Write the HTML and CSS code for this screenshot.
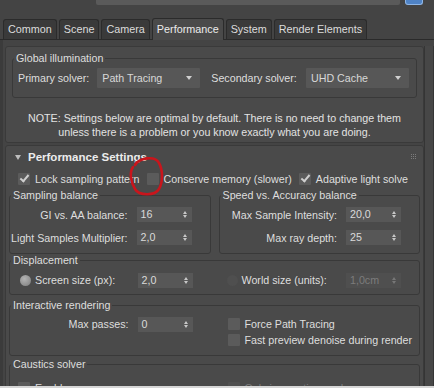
FILE: index.html
```html
<!DOCTYPE html>
<html lang="en">
<head>
  <meta charset="UTF-8">
  <title>Render Setup - Performance</title>
  <link rel="stylesheet" href="styles.css">
</head>
<body>

  <div class="topbar">
    <span class="preset-field"></span>
    <span class="preset-btn"></span>
  </div>

  <nav class="tabs">
    <div class="tab">Common</div>
    <div class="tab">Scene</div>
    <div class="tab">Camera</div>
    <div class="tab active">Performance</div>
    <div class="tab">System</div>
    <div class="tab">Render Elements</div>
  </nav>

  <div class="content">
    <div class="rollouts">

      <section class="rollout">
        <fieldset class="group gi-group">
          <legend>Global illumination</legend>
          <div class="solver-row">
            <span>Primary solver:</span>
            <div class="dropdown first">Path Tracing</div>
            <span class="second-label">Secondary solver:</span>
            <div class="dropdown second">UHD Cache</div>
          </div>
        </fieldset>
        <p class="note">NOTE: Settings below are optimal by default. There is no need to change them<br>unless there is a problem or you know exactly what you are doing.</p>
      </section>

      <section class="rollout">
        <header class="rollout-head">
          <span class="arrow"></span>
          <span class="head-title">Performance Settings</span>
          <span class="grip"></span>
        </header>

        <div class="check-row">
          <label class="check"><span class="box checked"></span>Lock sampling pattern</label>
          <label class="check"><span class="box"></span>Conserve memory (slower)</label>
          <label class="check"><span class="box checked"></span>Adaptive light solve</label>
        </div>

        <div class="two-col">
          <fieldset class="group">
            <legend>Sampling balance</legend>
            <div class="field"><span>GI vs. AA balance:</span><div class="spinner">16</div></div>
            <div class="field"><span>Light Samples Multiplier:</span><div class="spinner">2,0</div></div>
          </fieldset>
          <fieldset class="group">
            <legend>Speed vs. Accuracy balance</legend>
            <div class="field"><span>Max Sample Intensity:</span><div class="spinner">20,0</div></div>
            <div class="field"><span>Max ray depth:</span><div class="spinner">25</div></div>
          </fieldset>
        </div>

        <fieldset class="group displacement">
          <legend>Displacement</legend>
          <div class="halves">
            <div class="field radio-field">
              <label class="radio-label"><span class="radio on"></span>Screen size (px):</label>
              <div class="spinner">2,0</div>
            </div>
            <div class="field radio-field">
              <label class="radio-label"><span class="radio"></span>World size (units):</label>
              <div class="spinner disabled">1,0cm</div>
            </div>
          </div>
        </fieldset>

        <fieldset class="group interactive">
          <legend>Interactive rendering</legend>
          <div class="halves">
            <div class="field short"><span>Max passes:</span><div class="spinner">0</div></div>
            <div class="check-list">
              <label class="check"><span class="box"></span>Force Path Tracing</label>
              <label class="check"><span class="box"></span>Fast preview denoise during render</label>
            </div>
          </div>
        </fieldset>

        <fieldset class="group caustics">
          <legend>Caustics solver</legend>
          <div class="halves">
            <label class="check enable"><span class="box"></span>Enable</label>
            <label class="check dim"><span class="box"></span>Only in caustics mode</label>
          </div>
        </fieldset>
      </section>

    </div>
    <div class="scroll"></div>
  </div>

  <svg class="mark" width="44" height="48" viewBox="0 0 44 48">
    <path d="M10 12 C 14 5, 30 2, 34 10 C 38 17, 38 29, 34 36 C 30 43, 14 43, 10 36 C 6 29, 4 20, 8 14" fill="none" stroke="#c9151c" stroke-width="2.6" stroke-linecap="round"/>
  </svg>

  <div class="edge"></div>

</body>
</html>
```

FILE: styles.css
```css
* {
  box-sizing: border-box;
}

body {
  margin: 0;
  width: 434px;
  height: 388px;
  overflow: hidden;
  position: relative;
  background: #444444;
  color: #dedede;
  font-family: "Liberation Sans", Arial, sans-serif;
  font-size: 10.7px;
  white-space: nowrap;
}

/* preset bar cut off at the top */
.topbar {
  display: flex;
  height: 5px;
}

.preset-field {
  margin-left: 96px;
  width: 304px;
  background: #5a5a5a;
  border-radius: 0 0 2px 2px;
}

.preset-btn {
  margin-left: 5px;
  width: 18px;
  background: #4f83c6;
  border: 1px solid #8fb6e6;
  border-top: none;
  border-radius: 0 0 3px 3px;
}

/* tabs */
.tabs {
  display: flex;
  align-items: flex-end;
  gap: 2px;
  height: 35px;
  padding-left: 3px;
  border-bottom: 1px solid #2a2a2a;
}

.tab {
  height: 20px;
  line-height: 19px;
  padding: 0 4px;
  background: #3a3a3a;
  border: 1px solid #2b2b2b;
  border-bottom: none;
  border-radius: 3px 3px 0 0;
  color: #dcdcdc;
  font-size: 10.8px;
}

.tab.active {
  height: 22px;
  line-height: 21px;
  margin-bottom: -1px;
  background: #4a4a4a;
  color: #ececec;
}

/* content */
.content {
  display: flex;
  padding-top: 6px;
  border-left: 3px solid #3b3b3b;
}

.rollouts {
  margin-left: 2px;
  width: 419px;
}

.rollout {
  background: #4a4a4a;
  border: 1px solid #3a3a3a;
  border-radius: 3px;
  padding: 5px 3px 3px;
  margin-bottom: 2px;
}

.scroll {
  width: 10px;
  border-left: 1px solid #353535;
  border-right: 1px solid #353535;
  background: #474747;
}

/* group boxes */
.group {
  margin: 0;
  padding: 0;
  min-width: 0;
  border: 1px solid #393939;
  border-radius: 3px;
}

.group legend {
  margin-left: 1px;
  padding: 0 2px;
  line-height: 12px;
}

.gi-group {
  margin: 0 3px;
}

.solver-row {
  display: flex;
  align-items: center;
  margin: 4px 0 9px;
  padding: 0 7px 0 5px;
}

.second-label {
  margin-left: 11px;
}

.dropdown {
  position: relative;
  width: 103px;
  height: 20px;
  line-height: 20px;
  padding-left: 5px;
  background: #575757;
  color: #d8d8d8;
  border-radius: 1px;
}

.dropdown.first {
  margin-left: 8px;
}

.dropdown.second {
  margin-left: auto;
}

.dropdown::after {
  content: "";
  position: absolute;
  right: 8px;
  top: 8px;
  border-left: 3px solid transparent;
  border-right: 3px solid transparent;
  border-top: 4px solid #d0d0d0;
}

.note {
  margin: 13px 0 0;
  line-height: 14px;
  text-align: center;
  color: #e2e2e2;
}

/* performance settings rollout */
.rollout-head {
  display: flex;
  align-items: center;
  height: 22px;
  margin-top: -5px;
  padding-left: 6px;
}

.arrow {
  width: 0;
  height: 0;
  border-left: 3px solid transparent;
  border-right: 3px solid transparent;
  border-top: 5px solid #bdbdbd;
  margin-right: 7px;
}

.head-title {
  font-weight: bold;
  font-size: 11.5px;
  color: #ececec;
}

.grip {
  position: relative;
  top: -3px;
  margin-left: auto;
  margin-right: 8px;
  width: 1px;
  height: 1px;
  background: #7c7c7c;
  box-shadow: 2px 0 #7c7c7c, 4px 0 #7c7c7c,
    0 2px #7c7c7c, 2px 2px #7c7c7c, 4px 2px #7c7c7c,
    0 4px #7c7c7c, 2px 4px #7c7c7c, 4px 4px #7c7c7c;
}

.check-row {
  display: flex;
  align-items: center;
  gap: 7px;
  height: 21px;
  padding-left: 9px;
}

.check {
  display: flex;
  align-items: center;
  gap: 5px;
}

.box {
  position: relative;
  width: 12px;
  height: 12px;
  background: #5b5b5b;
  border-radius: 1px;
  flex: none;
}

.box.checked::after {
  content: "";
  position: absolute;
  left: 2px;
  top: 2px;
  width: 7px;
  height: 3px;
  border-left: 2px solid #cfcfcf;
  border-bottom: 2px solid #cfcfcf;
  transform: rotate(-50deg);
}

.two-col {
  display: grid;
  grid-template-columns: 1fr 1fr;
  gap: 8px;
}

.two-col .group {
  padding: 2px 0 4px;
}

.field {
  display: grid;
  grid-template-columns: 1fr 55px;
  align-items: center;
  column-gap: 9px;
  height: 23px;
  padding-right: 18px;
  text-align: right;
}

.spinner {
  position: relative;
  height: 15px;
  line-height: 15px;
  padding-left: 4px;
  background: #575757;
  text-align: left;
  color: #dadada;
}

.spinner::before,
.spinner::after {
  content: "";
  position: absolute;
  right: 5px;
  border-left: 2px solid transparent;
  border-right: 2px solid transparent;
}

.spinner::before {
  top: 4px;
  border-bottom: 3px solid #c8c8c8;
}

.spinner::after {
  top: 8px;
  border-top: 3px solid #c8c8c8;
}

.spinner.disabled {
  background: #4f4f4f;
  color: #7c7c7c;
}

.spinner.disabled::before {
  border-bottom-color: #777;
}

.spinner.disabled::after {
  border-top-color: #777;
}

.halves {
  display: grid;
  grid-template-columns: 1fr 1fr;
  column-gap: 8px;
}

.displacement {
  padding: 3px 0;
}

.radio-field {
  height: 22px;
  text-align: left;
}

.radio-label {
  display: flex;
  align-items: center;
  gap: 4px;
  padding-left: 10px;
}

.radio-field + .radio-field .radio-label {
  padding-left: 8px;
}

.radio {
  width: 11px;
  height: 11px;
  border-radius: 50%;
  background: #4f4f4f;
}

.radio.on {
  background: radial-gradient(circle at 40% 35%, #b4b4b4, #7c7c7c);
}

.interactive {
  margin-top: 4px;
  padding: 5px 0 7px;
}

.field.short {
  height: 16px;
  align-self: start;
}

.check-list {
  display: flex;
  flex-direction: column;
  padding-left: 9px;
}

.check-list .check {
  height: 16px;
}

.caustics {
  margin-top: 2px;
  padding: 11px 0 10px;
}

.caustics .check {
  height: 14px;
}

.enable {
  padding-left: 8px;
}

.caustics .check.dim {
  padding-left: 9px;
  color: #7c7c7c;
}

.dim .box {
  background: #505050;
}

/* red annotation circle drawn over the screenshot */
.mark {
  position: absolute;
  left: 125px;
  top: 153px;
}

.edge {
  position: absolute;
  left: 0;
  right: 0;
  bottom: 0;
  height: 2px;
  background: #d6d6d6;
}
```
